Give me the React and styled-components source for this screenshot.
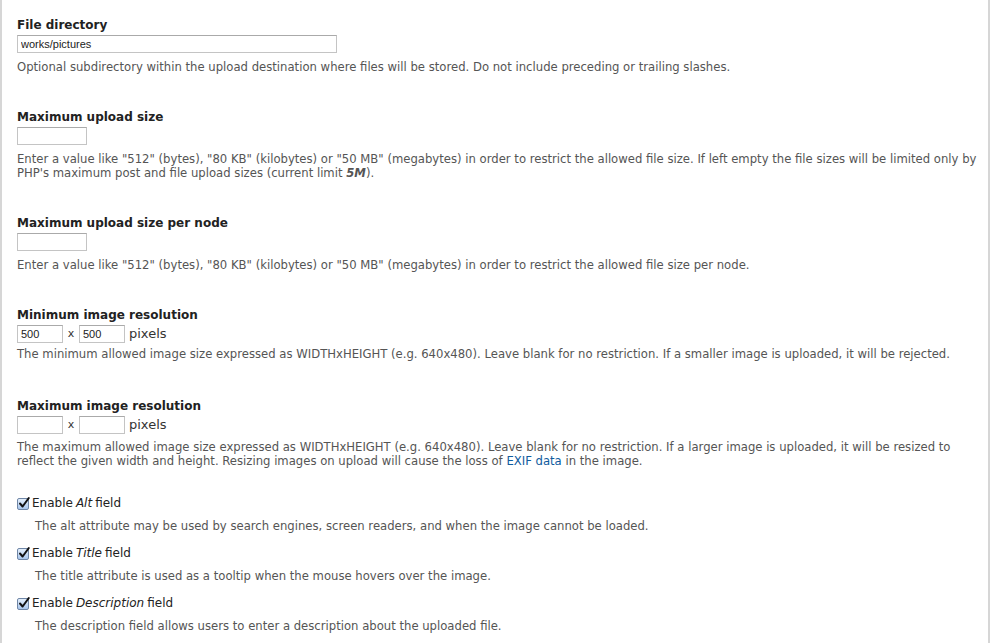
import React from 'react';
import styled, {createGlobalStyle} from 'styled-components';

const GlobalStyle = createGlobalStyle`
  body {
    margin: 0;
    background: #fff;
    font-family: "DejaVu Sans", Verdana, sans-serif;
    color: #333;
  }
`;

const Page = styled.div`
  box-sizing: border-box;
  width: 990px;
  min-height: 643px;
  border-left: 2px solid #d6d6d6;
  border-right: 2px solid #d6d6d6;
  padding: 18px 2px 0 15px;
`;

const Field = styled.div`
  margin-bottom: ${p => p.$gap || 36}px;
`;

const Label = styled.div`
  font-size: 12px;
  font-weight: bold;
  color: #222;
  line-height: 15px;
  margin-bottom: 2px;
`;

const Input = styled.input`
  box-sizing: border-box;
  width: ${p => p.$w}px;
  height: 18px;
  border: 1px solid #c4c4c4;
  border-top-color: #aaa;
  padding: 1px 3px;
  font-family: "Liberation Sans", Arial, sans-serif;
  font-size: 11px;
  color: #222;
  margin: 0;
  outline: none;
  display: block;
`;

const Row = styled.div`
  display: flex;
  align-items: center;
  gap: 4px;
  margin-top: 1px;
  font-size: 13px;
  line-height: 18px;
  color: #333;
`;

const Times = styled.span`
  font-size: 11px;
  width: 8px;
  text-align: center;
`;

const Desc = styled.div`
  font-size: 11.65px;
  line-height: 14px;
  color: #555;
  margin-top: ${p => p.$top || 7}px;
  padding-left: ${p => (p.$indent ? 18 : 0)}px;
  & em { font-style: italic; font-weight: bold; }
  & a { color: #0f5b9e; text-decoration: none; }
`;

const CheckRow = styled.label`
  display: flex;
  align-items: center;
  gap: 3px;
  font-size: 12px;
  color: #222;
  line-height: 15px;
  & em { font-style: italic; }
`;

const Box = styled.span`
  display: inline-flex;
  width: 12px;
  height: 12px;
  border: 1px solid #6f86a6;
  border-radius: 2px;
  background: linear-gradient(#e3eefb, #a9c6ec);
  box-sizing: border-box;
  position: relative;
`;

const Check = () => (
  <Box>
    <svg width="14" height="14" viewBox="0 0 14 14" style={{position: 'absolute', left: -1, top: -3}}>
      <path d="M3 7.5 L5.6 10.5 L11.8 2" fill="none" stroke="#111" strokeWidth="2" strokeLinecap="round" strokeLinejoin="round"/>
    </svg>
  </Box>
);

const CheckField = styled.div`
  margin-bottom: 13px;
`;

export default function App() {
  return (
    <Page>
      <GlobalStyle/>
      <Field>
        <Label>File directory</Label>
        <Input $w={320} defaultValue="works/pictures"/>
        <Desc>Optional subdirectory within the upload destination where files will be stored. Do not include preceding or trailing slashes.</Desc>
      </Field>
      <Field>
        <Label>Maximum upload size</Label>
        <Input $w={70}/>
        <Desc>Enter a value like "512" (bytes), "80 KB" (kilobytes) or "50 MB" (megabytes) in order to restrict the allowed file size. If left empty the file sizes will be limited only by PHP's maximum post and file upload sizes (current limit <em>5M</em>).</Desc>
      </Field>
      <Field>
        <Label>Maximum upload size per node</Label>
        <Input $w={70}/>
        <Desc>Enter a value like "512" (bytes), "80 KB" (kilobytes) or "50 MB" (megabytes) in order to restrict the allowed file size per node.</Desc>
      </Field>
      <Field $gap={38}>
        <Label>Minimum image resolution</Label>
        <Row>
          <Input $w={46} defaultValue="500"/>
          <Times>x</Times>
          <Input $w={46} defaultValue="500"/>
          <span>pixels</span>
        </Row>
        <Desc $top={4}>The minimum allowed image size expressed as WIDTHxHEIGHT (e.g. 640x480). Leave blank for no restriction. If a smaller image is uploaded, it will be rejected.</Desc>
      </Field>
      <Field $gap={28}>
        <Label>Maximum image resolution</Label>
        <Row>
          <Input $w={46}/>
          <Times>x</Times>
          <Input $w={46}/>
          <span>pixels</span>
        </Row>
        <Desc $top={6}>The maximum allowed image size expressed as WIDTHxHEIGHT (e.g. 640x480). Leave blank for no restriction. If a larger image is uploaded, it will be resized to reflect the given width and height. Resizing images on upload will cause the loss of <a href="#exif">EXIF data</a> in the image.</Desc>
      </Field>
      <CheckField>
        <CheckRow><Check/>Enable <em>Alt</em> field</CheckRow>
        <Desc $indent $top={8}>The alt attribute may be used by search engines, screen readers, and when the image cannot be loaded.</Desc>
      </CheckField>
      <CheckField>
        <CheckRow><Check/>Enable <em>Title</em> field</CheckRow>
        <Desc $indent $top={8}>The title attribute is used as a tooltip when the mouse hovers over the image.</Desc>
      </CheckField>
      <CheckField>
        <CheckRow><Check/>Enable <em>Description</em> field</CheckRow>
        <Desc $indent $top={8}>The description field allows users to enter a description about the uploaded file.</Desc>
      </CheckField>
    </Page>
  );
}
